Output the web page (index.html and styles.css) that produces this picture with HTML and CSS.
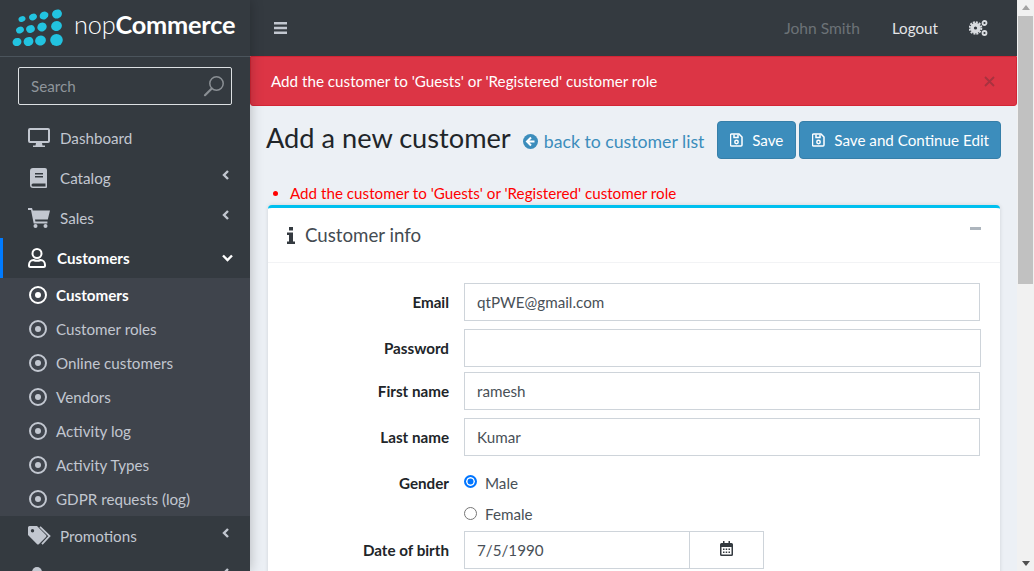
FILE: index.html
```html
<!DOCTYPE html>
<html lang="en">
<head>
    <link rel="stylesheet" href="styles.css">
    <meta charset="UTF-8">
    <meta name="viewport" content="width=device-width, initial-scale=1.0">
    <title>Add a new customer</title>
</head>
<body>
    <!-- Sidebar -->
    <aside class="sidebar">
        <div class="brand">
            <svg class="brand-dots" width="56" height="40" viewBox="0 0 56 40">
                <g fill="#22c3e0">
                    <ellipse cx="10" cy="10" rx="3.6" ry="2.8" transform="rotate(-25 10 10)"/>
                    <ellipse cx="21" cy="8" rx="4" ry="3.2" transform="rotate(-25 21 8)"/>
                    <ellipse cx="32" cy="6.500" rx="4.500" ry="3.800" transform="rotate(-25 32 6.500)"/>
                    <ellipse cx="45" cy="5" rx="5" ry="4.500" transform="rotate(-25 45 5)"/>
                    <ellipse cx="8" cy="21" rx="4" ry="3.300" transform="rotate(-25 8 21)"/>
                    <ellipse cx="18.500" cy="20" rx="4.400" ry="3.800" transform="rotate(-25 18.500 20)"/>
                    <ellipse cx="30" cy="18" rx="4.800" ry="4.300" transform="rotate(-25 30 18)"/>
                    <ellipse cx="44.500" cy="17" rx="5.500" ry="5" transform="rotate(-25 44.500 17)"/>
                    <ellipse cx="5" cy="33" rx="4.500" ry="4" transform="rotate(-25 5 33)"/>
                    <ellipse cx="16.500" cy="32.500" rx="5" ry="4.500" transform="rotate(-25 16.500 32.500)"/>
                    <ellipse cx="28.500" cy="31.500" rx="5.500" ry="5" transform="rotate(-25 28.500 31.500)"/>
                    <ellipse cx="44.500" cy="31" rx="6.300" ry="6"/>
                </g>
            </svg>
            <span class="brand-name">nop<b>Commerce</b></span>
        </div>

        <div class="search">
            <span>Search</span>
            <svg width="22" height="22" viewBox="0 0 22 22" fill="none" stroke="#8a8f94" stroke-width="1.500">
                <circle cx="13.500" cy="8.500" r="6.700"/>
                <path d="M8.800 13.500L2 20.200" stroke-width="2.200" stroke-linecap="round"/>
            </svg>
        </div>

        <ul class="menu">
            <li class="menu-item">
                <svg class="menu-icon" width="22" height="20" viewBox="0 0 22 20"><path fill="#c2c7d0" fill-rule="evenodd" d="M2 0h18a2 2 0 0 1 2 2v11a2 2 0 0 1-2 2h-6l.5 2.500H17V19H5v-1.500h2.500L8 15H2a2 2 0 0 1-2-2V2a2 2 0 0 1 2-2zm0 2v11h18V2z"/></svg>
                <span>Dashboard</span>
            </li>
            <li class="menu-item">
                <svg class="menu-icon" width="22" height="20" viewBox="0 0 22 20"><path fill="#c2c7d0" fill-rule="evenodd" d="M5 0h12a2 2 0 0 1 2 2v17a1 1 0 0 1-1 1H5a3 3 0 0 1-3-3V3a3 3 0 0 1 3-3zm2 5v1.500h8V5zm0 3v1.500h8V8zm-2 7.500a1.500 1.500 0 0 0 0 3h12.500v-3z"/></svg>
                <span>Catalog</span>
                <svg class="caret" width="8" height="10" viewBox="0 0 8 10"><path d="M6 1L2 5l4 4" fill="none" stroke="#c2c7d0" stroke-width="2.400"/></svg>
            </li>
            <li class="menu-item">
                <svg class="menu-icon" width="22" height="20" viewBox="0 0 22 20"><path fill="#c2c7d0" d="M0 0h4l.8 2.500H22l-2.200 9H7l.4 2h12v2H5.700L3 2H0z"/><circle cx="7.500" cy="18" r="2" fill="#c2c7d0"/><circle cx="17.500" cy="18" r="2" fill="#c2c7d0"/></svg>
                <span>Sales</span>
                <svg class="caret" width="8" height="10" viewBox="0 0 8 10"><path d="M6 1L2 5l4 4" fill="none" stroke="#c2c7d0" stroke-width="2.400"/></svg>
            </li>
            <li class="menu-item menu-open">
                <svg class="menu-icon" width="18" height="20" viewBox="0 0 18 20" fill="none" stroke="#fff" stroke-width="2"><circle cx="9" cy="5.500" r="4.500"/><path d="M1 17c0-3 2-5 4.500-5 1 .5 2.200.8 3.500.8s2.500-.3 3.500-.8C15 12 17 14 17 17v.5a1.500 1.500 0 0 1-1.500 1.500h-13A1.500 1.500 0 0 1 1 17.500z"/></svg>
                <span>Customers</span>
                <svg class="caret" width="11" height="8" viewBox="0 0 11 8"><path d="M1 1.500l4.500 4.500L10 1.500" fill="none" stroke="#fff" stroke-width="2.400"/></svg>
            </li>
            <li>
                <ul class="submenu">
                    <li class="sub-item sub-active"><i class="ring"></i>Customers</li>
                    <li class="sub-item"><i class="ring"></i>Customer roles</li>
                    <li class="sub-item"><i class="ring"></i>Online customers</li>
                    <li class="sub-item"><i class="ring"></i>Vendors</li>
                    <li class="sub-item"><i class="ring"></i>Activity log</li>
                    <li class="sub-item"><i class="ring"></i>Activity Types</li>
                    <li class="sub-item"><i class="ring"></i>GDPR requests (log)</li>
                </ul>
            </li>
            <li class="menu-item">
                <svg class="menu-icon" width="24" height="20" viewBox="0 0 24 20"><path fill="#c2c7d0" fill-rule="evenodd" d="M1.500 0h7.500l9 9a1.500 1.500 0 0 1 0 2.100l-7 7a1.500 1.500 0 0 1-2.100 0L0 9V1.500A1.500 1.500 0 0 1 1.500 0zM4.500 3a1.700 1.700 0 1 0 0 3.400 1.700 1.700 0 0 0 0-3.400z"/><path fill="none" stroke="#c2c7d0" stroke-width="1.800" d="M12 .8l9.500 9.300-7.500 8"/></svg>
                <span>Promotions</span>
                <svg class="caret" width="8" height="10" viewBox="0 0 8 10"><path d="M6 1L2 5l4 4" fill="none" stroke="#c2c7d0" stroke-width="2.400"/></svg>
            </li>
            <li class="menu-item">
                <svg class="menu-icon" width="18" height="20" viewBox="0 0 18 20"><circle cx="9" cy="6" r="5" fill="#c2c7d0"/></svg>
                <span></span>
                <svg class="caret" width="8" height="10" viewBox="0 0 8 10"><path d="M6 1L2 5l4 4" fill="none" stroke="#c2c7d0" stroke-width="2.400"/></svg>
            </li>
        </ul>
    </aside>

    <!-- Contenido -->
    <main class="main">
        <header class="topbar">
            <svg class="burger" width="14" height="12" viewBox="0 0 14 12"><path fill="#c2c7d0" d="M0 0h13v2.500H0zM0 4.800h13v2.500H0zM0 9.500h13V12H0z"/></svg>
            <span class="user">John Smith</span>
            <span class="logout">Logout</span>
            <svg class="gears" width="19" height="16" viewBox="0 0 19 16">
                <g fill="none" stroke="#d8dbdf">
                    <circle cx="6.500" cy="8" r="3.400" stroke-width="3.600"/>
                    <circle cx="6.500" cy="8" r="5.800" stroke-width="2" stroke-dasharray="2 1"/>
                    <circle cx="15.500" cy="3" r="2" stroke-width="1.800"/>
                    <circle cx="15.500" cy="13" r="2" stroke-width="1.800"/>
                </g>
            </svg>
        </header>

        <div class="alert">
            <span>Add the customer to 'Guests' or 'Registered' customer role</span>
            <svg width="11" height="11" viewBox="0 0 11 11"><path d="M1 1l9 9M10 1l-9 9" stroke="#a8323f" stroke-width="1.800"/></svg>
        </div>

        <div class="title-row">
            <h1>Add a new customer</h1>
            <a class="back-link" href="#">
                <svg width="15" height="15" viewBox="0 0 15 15"><circle cx="7.500" cy="7.500" r="7.500" fill="#3c8dbc"/><path d="M8 3.500L4 7.500l4 4M4.500 7.500h7" fill="none" stroke="#fff" stroke-width="2"/></svg>
                back to customer list
            </a>
            <div class="actions">
                <button class="btn" type="button">
                    <svg width="13" height="14" viewBox="0 0 13 14" fill="none" stroke="#fff" stroke-width="1.500"><path d="M1.500 1h7.500l3 3v8a1 1 0 0 1-1 1h-9.500a1 1 0 0 1-1-1v-10a1 1 0 0 1 1-1z"/><path d="M4 1.500v3h4v-3"/><circle cx="6.500" cy="9" r="1.700"/></svg>
                    Save
                </button>
                <button class="btn btn-wide" type="button">
                    <svg width="13" height="14" viewBox="0 0 13 14" fill="none" stroke="#fff" stroke-width="1.500"><path d="M1.500 1h7.500l3 3v8a1 1 0 0 1-1 1h-9.500a1 1 0 0 1-1-1v-10a1 1 0 0 1 1-1z"/><path d="M4 1.500v3h4v-3"/><circle cx="6.500" cy="9" r="1.700"/></svg>
                    Save and Continue Edit
                </button>
            </div>
        </div>

        <ul class="errors">
            <li>Add the customer to 'Guests' or 'Registered' customer role</li>
        </ul>

        <section class="card">
            <div class="card-header">
                <svg width="8" height="17" viewBox="0 0 8 17"><path fill="#343a40" d="M2 0h4v3.500H2zM0 5.500h6V14.500h2V17H0v-2.500h2V8H0z"/></svg>
                <span>Customer info</span>
                <i class="collapse"></i>
            </div>
            <form class="form">
                <div class="row row-email">
                    <label>Email</label>
                    <div class="input">qtPWE@gmail.com</div>
                </div>
                <div class="row row-password">
                    <label>Password</label>
                    <div class="input input-wide"></div>
                </div>
                <div class="row row-first">
                    <label>First name</label>
                    <div class="input">ramesh</div>
                </div>
                <div class="row row-last">
                    <label>Last name</label>
                    <div class="input">Kumar</div>
                </div>
                <div class="row row-gender">
                    <label>Gender</label>
                    <div class="radio"><i class="radio-dot radio-on"></i>Male</div>
                </div>
                <div class="row row-female">
                    <label></label>
                    <div class="radio"><i class="radio-dot"></i>Female</div>
                </div>
                <div class="row row-date">
                    <label>Date of birth</label>
                    <div class="date">
                        <div class="date-value">7/5/1990</div>
                        <div class="date-btn">
                            <svg width="13" height="15" viewBox="0 0 13 15"><path fill="#343a40" fill-rule="evenodd" d="M3 0h1.500v2h4V0H10v2h1.500A1.500 1.500 0 0 1 13 3.500v10a1.500 1.500 0 0 1-1.500 1.500h-10A1.500 1.500 0 0 1 0 13.500v-10A1.500 1.500 0 0 1 1.500 2H3zM1.500 6v7.500h10V6zM3 7.500h1.500V9H3zm2.700 0h1.500V9H5.700zm2.800 0H10V9H8.500zM3 10.500h1.500V12H3zm2.700 0h1.500V12H5.700zm2.800 0H10V12H8.500z"/></svg>
                        </div>
                    </div>
                </div>
            </form>
        </section>
    </main>

    <!-- Barra de desplazamiento -->
    <div class="scrollbar">
        <i class="arrow-up"></i>
        <div class="thumb"></div>
        <i class="arrow-down"></i>
    </div>
</body>
</html>
```

FILE: styles.css
```css
/* Estilos generales */
* {
    box-sizing: border-box;
}

body {
    font-family: Lato, "Open Sans", sans-serif;
    font-size: 15.2px;
    color: #212529;
    background-color: #ecf0f5;
    margin: 0;
    height: 100vh;
    overflow: hidden;
    display: flex;
    white-space: nowrap;
}

ul {
    list-style: none;
    margin: 0;
    padding: 0;
}

/* Sidebar */
.sidebar {
    width: 250px;
    flex: none;
    background-color: #343a40;
    color: #c2c7d0;
    box-shadow: 0 0 12px rgba(0, 0, 0, 0.25);
    position: relative;
}

.brand {
    height: 57px;
    border-bottom: 1px solid #4b545c;
    padding: 9px 0 0 12px;
    display: flex;
    align-items: flex-start;
}

.brand-name {
    font-size: 25.3px;
    font-weight: 300;
    color: #fff;
    margin: 0 0 0 6px;
    letter-spacing: -0.2px;
}

.brand-name b {
    font-weight: 700;
}

.search {
    margin: 10px 18px 13px;
    height: 38px;
    border: 1px solid #dde0e3;
    border-radius: 2px;
    padding: 0 6px 0 12px;
    display: flex;
    align-items: center;
    justify-content: space-between;
    color: #8f959b;
}

.menu-item {
    height: 40px;
    display: flex;
    align-items: center;
    position: relative;
    padding-left: 28px;
}

.menu-icon {
    flex: none;
}

.menu-item span {
    position: absolute;
    left: 60px;
}

.caret {
    position: absolute;
    right: 20px;
    top: 12px;
}

.menu-open {
    color: #fff;
    font-weight: 700;
    border-left: 3px solid #007bff;
    padding-left: 25px;
}

.menu-open span {
    left: 54px;
}

.menu-open .caret {
    right: 17px;
    top: 16px;
}

.submenu {
    background-color: #3f444c;
}

.sub-item {
    height: 34px;
    display: flex;
    align-items: center;
    padding-left: 29px;
    gap: 9px;
}

.ring {
    width: 18px;
    height: 18px;
    border: 2px solid #c2c7d0;
    border-radius: 50%;
    display: flex;
    align-items: center;
    justify-content: center;
}

.ring::after {
    content: "";
    width: 6px;
    height: 6px;
    border-radius: 50%;
    background-color: #c2c7d0;
}

.sub-active {
    color: #fff;
    font-weight: 700;
}

.sub-active .ring {
    border-color: #fff;
}

.sub-active .ring::after {
    background-color: #fff;
}

/* Contenido */
.main {
    flex: 1;
    min-width: 0;
}

.topbar {
    height: 56px;
    background-color: #343a40;
    display: flex;
    align-items: center;
    padding: 0 29px 0 24px;
}

.burger {
    margin-right: auto;
}

.user {
    color: #6c7277;
    font-size: 15.6px;
    margin-right: 32px;
}

.logout {
    color: #e4e6e8;
    margin-right: 31px;
}

.alert {
    height: 50px;
    background-color: #dc3545;
    border: 1px solid #d32535;
    border-radius: 0 0 3px 3px;
    color: #fff;
    padding: 0 21px 0 20px;
    display: flex;
    align-items: center;
    justify-content: space-between;
}

.title-row {
    display: flex;
    align-items: center;
    height: 68px;
    padding: 0 16px;
    margin-bottom: 10px;
}

h1 {
    font-size: 27.2px;
    font-weight: 400;
    margin: -6px 12px 0 0;
}

.back-link {
    color: #3c8dbc;
    font-size: 17.7px;
    text-decoration: none;
    display: flex;
    align-items: center;
    gap: 6px;
    margin-top: 2px;
}

.actions {
    margin-left: auto;
    display: flex;
    gap: 3px;
}

.btn {
    height: 38px;
    background-color: #3c8dbc;
    border: 1px solid #367fa9;
    border-radius: 4px;
    color: #fff;
    font-family: inherit;
    font-size: 15.2px;
    padding: 0 12px;
    display: flex;
    align-items: center;
    gap: 9px;
}

.btn-wide {
    padding-right: 11px;
}

.errors {
    list-style: disc;
    color: #ff0000;
    padding-left: 40px;
    height: 21px;
    line-height: 18px;
}

.card {
    margin: 0 17px 0 18px;
    background-color: #fff;
    border-top: 3px solid #00c0ef;
    border-radius: 4px 4px 0 0;
    box-shadow: 0 0 4px rgba(0, 0, 0, 0.12);
}

.card-header {
    height: 55px;
    border-bottom: 1px solid #f2f3f5;
    padding: 0 19px;
    display: flex;
    align-items: center;
    gap: 10px;
    font-size: 18.7px;
    color: #444b52;
}

.collapse {
    width: 11px;
    height: 3px;
    background-color: #adb5bd;
    margin: -14px 0 0 auto;
}

.form {
    padding-top: 20px;
    height: 320px;
}

.row {
    display: flex;
    align-items: center;
}

.row label {
    width: 181px;
    flex: none;
    text-align: right;
    font-weight: 700;
    margin-right: 15px;
}

.input {
    width: 516px;
    height: 38px;
    border: 1px solid #ced4da;
    padding: 0 12px;
    display: flex;
    align-items: center;
    color: #495057;
}

.input-wide {
    width: 517px;
}

.row-password {
    margin-top: 8px;
}

.row-first {
    margin-top: 5px;
}

.row-last {
    margin-top: 8px;
}

.row-gender {
    margin-top: 15px;
    height: 24px;
}

.row-female {
    margin-top: 7px;
    height: 24px;
}

.row-date {
    margin-top: 5px;
}

.radio {
    display: flex;
    align-items: center;
    color: #495057;
}

.radio-dot {
    width: 13px;
    height: 13px;
    border: 1px solid #767676;
    border-radius: 50%;
    margin: -4px 8px 0 0;
    background-color: #fff;
}

.row-female .radio-dot {
    margin-top: -2px;
}

.radio-on {
    border: 2px solid #0075ff;
    box-shadow: inset 0 0 0 1.5px #fff;
    background-color: #0075ff;
}

.date {
    width: 300px;
    height: 38px;
    border: 1px solid #ced4da;
    display: flex;
}

.date-value {
    flex: 1;
    padding-left: 12px;
    display: flex;
    align-items: center;
    color: #495057;
}

.date-btn {
    width: 74px;
    border-left: 1px solid #ced4da;
    display: flex;
    align-items: center;
    justify-content: center;
    padding-bottom: 3px;
}

/* Barra de desplazamiento */
.scrollbar {
    width: 17px;
    flex: none;
    background-color: #f1f1f1;
    display: flex;
    flex-direction: column;
    align-items: center;
    padding: 5px 0;
}

.thumb {
    width: 15px;
    height: 268px;
    background-color: #c1c1c1;
    margin-top: 6px;
}

.arrow-up {
    border-left: 4px solid transparent;
    border-right: 4px solid transparent;
    border-bottom: 5px solid #a3a3a3;
}

.arrow-down {
    margin-top: auto;
    border-left: 4px solid transparent;
    border-right: 4px solid transparent;
    border-top: 5px solid #505050;
}
```
